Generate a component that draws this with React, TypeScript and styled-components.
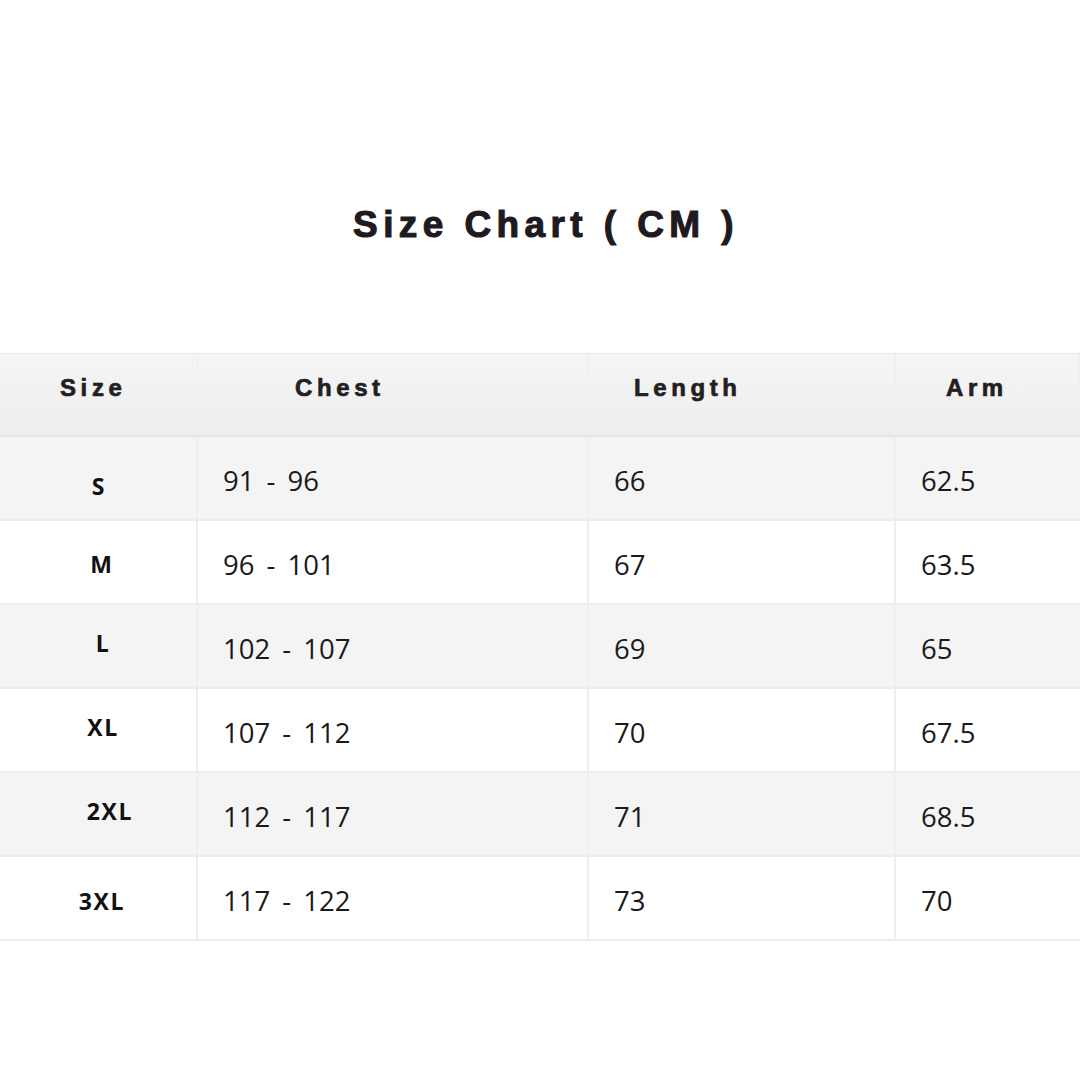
import React from "react";
import styled, { createGlobalStyle } from "styled-components";

const Global = createGlobalStyle`
  html, body { margin: 0; padding: 0; background: #ffffff; }
  #root { width: 1080px; height: 1080px; overflow: hidden; }
`;

const Page = styled.div`
  width: 1080px;
  height: 1080px;
  display: flex;
  flex-direction: column;
  background: #ffffff;
`;

const Title = styled.h1`
  margin: 203px 0 0 0;
  height: 44px;
  line-height: 44px;
  text-align: center;
  padding-left: 12px;
  font-family: "Liberation Sans", Arial, sans-serif;
  font-weight: 700;
  font-size: 37px;
  letter-spacing: 5.4px;
  color: #1e1a1d;
  -webkit-text-stroke: 1.1px #1e1a1d;
`;

const Table = styled.div`
  margin-top: 106px;
  display: grid;
  grid-template-columns: 198px 391px 307px 1fr;
`;

const HeadCell = styled.div<{ $pad: number }>`
  height: 84px;
  box-sizing: border-box;
  border-top: 1px solid #e6e6e6;
  border-bottom: 2px solid #e4e4e4;
  border-right: 1px solid #eeeeee;
  background: linear-gradient(#f5f5f5, #ededed);
  display: flex;
  align-items: center;
  padding-left: ${(p) => p.$pad}px;
  padding-bottom: 13px;
  font-family: "Liberation Sans", Arial, sans-serif;
  font-weight: 700;
  font-size: 24px;
  letter-spacing: 4.6px;
  color: #231f20;
  -webkit-text-stroke: 0.7px #231f20;
  &:last-child { border-right: none; }
`;

const Cell = styled.div<{ $alt: boolean; $last?: boolean }>`
  height: 84px;
  box-sizing: border-box;
  background: ${(p) => (p.$alt ? "#f4f4f4" : "#ffffff")};
  border-bottom: 2px solid #ececec;
  border-right: ${(p) => (p.$last ? "none" : "2px solid #eeeeee")};
  display: flex;
  align-items: center;
  padding-left: 25px;
  padding-top: 4px;
  font-family: "Open Sans", "Noto Sans", sans-serif;
  font-size: 27.5px;
  word-spacing: 5px;
  color: #1a1a1a;
`;

const SizeCell = styled.div<{ $alt: boolean }>`
  height: 84px;
  box-sizing: border-box;
  background: ${(p) => (p.$alt ? "#f4f4f4" : "#ffffff")};
  border-bottom: 2px solid #ececec;
  border-right: 2px solid #eeeeee;
  display: flex;
  align-items: center;
  justify-content: center;
`;

const SizeLabel = styled.span<{ $dx: number; $dy: number }>`
  margin-left: ${(p) => p.$dx * 2}px;
  margin-top: ${(p) => p.$dy * 2}px;
  font-family: "Open Sans", "Noto Sans", sans-serif;
  font-weight: 700;
  font-size: 23px;
  letter-spacing: 1.6px;
  color: #111111;
`;

const headers = [
  { label: "Size", pad: 60 },
  { label: "Chest", pad: 97 },
  { label: "Length", pad: 45 },
  { label: "Arm", pad: 50 },
];

const rows = [
  { size: "S", chest: "91 - 96", length: "66", arm: "62.5", dx: 1, dy: 8 },
  { size: "M", chest: "96 - 101", length: "67", arm: "63.5", dx: 4, dy: 2 },
  { size: "L", chest: "102 - 107", length: "69", arm: "65", dx: 5, dy: -3 },
  { size: "XL", chest: "107 - 112", length: "70", arm: "67.5", dx: 5, dy: -3 },
  { size: "2XL", chest: "112 - 117", length: "71", arm: "68.5", dx: 12, dy: -3 },
  { size: "3XL", chest: "117 - 122", length: "73", arm: "70", dx: 4, dy: 3 },
];

export default function App() {
  return (
    <>
      <Global />
      <Page>
        <Title>Size Chart ( CM )</Title>
        <Table>
          {headers.map((h) => (
            <HeadCell key={h.label} $pad={h.pad}>
              {h.label}
            </HeadCell>
          ))}
          {rows.map((r, i) => {
            const alt = i % 2 === 0;
            return (
              <React.Fragment key={r.size}>
                <SizeCell $alt={alt}>
                  <SizeLabel $dx={r.dx} $dy={r.dy}>
                    {r.size}
                  </SizeLabel>
                </SizeCell>
                <Cell $alt={alt}>{r.chest}</Cell>
                <Cell $alt={alt}>{r.length}</Cell>
                <Cell $alt={alt} $last>
                  {r.arm}
                </Cell>
              </React.Fragment>
            );
          })}
        </Table>
      </Page>
    </>
  );
}
